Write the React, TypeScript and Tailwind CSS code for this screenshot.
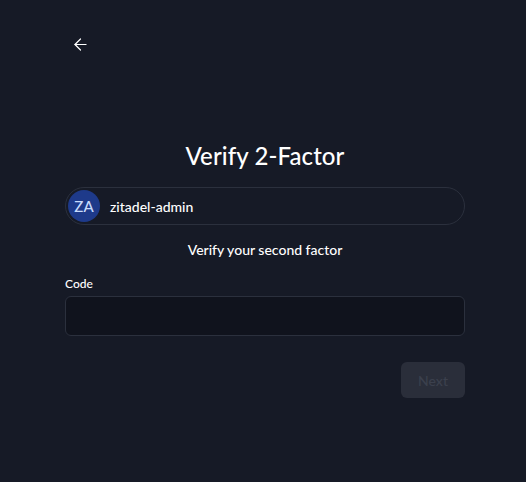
import { ArrowLeft } from "lucide-react"

export default function App() {
  return (
    <div
      className="w-[526px] h-[482px] bg-[#161a26] text-white flex flex-col"
      style={{ fontFamily: "Lato, 'Noto Sans', sans-serif" }}
    >
      <div className="pl-[71px] pt-[35px] h-[140px]">
        <ArrowLeft className="w-[19px] h-[19px] text-white" strokeWidth={1.5} />
      </div>
      <div className="w-[400px] ml-[65px] flex flex-col">
        <h1 className="text-center text-[24px] leading-[32px] font-medium tracking-[0.1px]">Verify 2-Factor</h1>
        <div className="mt-[15px] h-[38px] rounded-full border border-[#2b303d] flex items-center pl-[2px] gap-[10px]">
          <div className="w-[32px] h-[32px] rounded-full bg-[#1e3a8a] text-[#c7dafc] flex items-center justify-center text-[15px] font-medium">
            ZA
          </div>
          <span className="text-[14px] font-medium">zitadel-admin</span>
        </div>
        <p className="text-center text-[14px] font-medium mt-[15px] leading-[20px]">Verify your second factor</p>
        <label className="text-[12px] font-medium mt-[16px] leading-[16px]">Code</label>
        <div className="mt-[4px] h-[40px] rounded-md border border-[#2b303d] bg-[#10131d]"></div>
        <div className="flex justify-end mt-[26px]">
          <button className="w-[64px] h-[36px] rounded-md bg-[#2a2e3a] text-[#3b404d] text-[14px] font-medium">
            Next
          </button>
        </div>
      </div>
    </div>
  )
}
